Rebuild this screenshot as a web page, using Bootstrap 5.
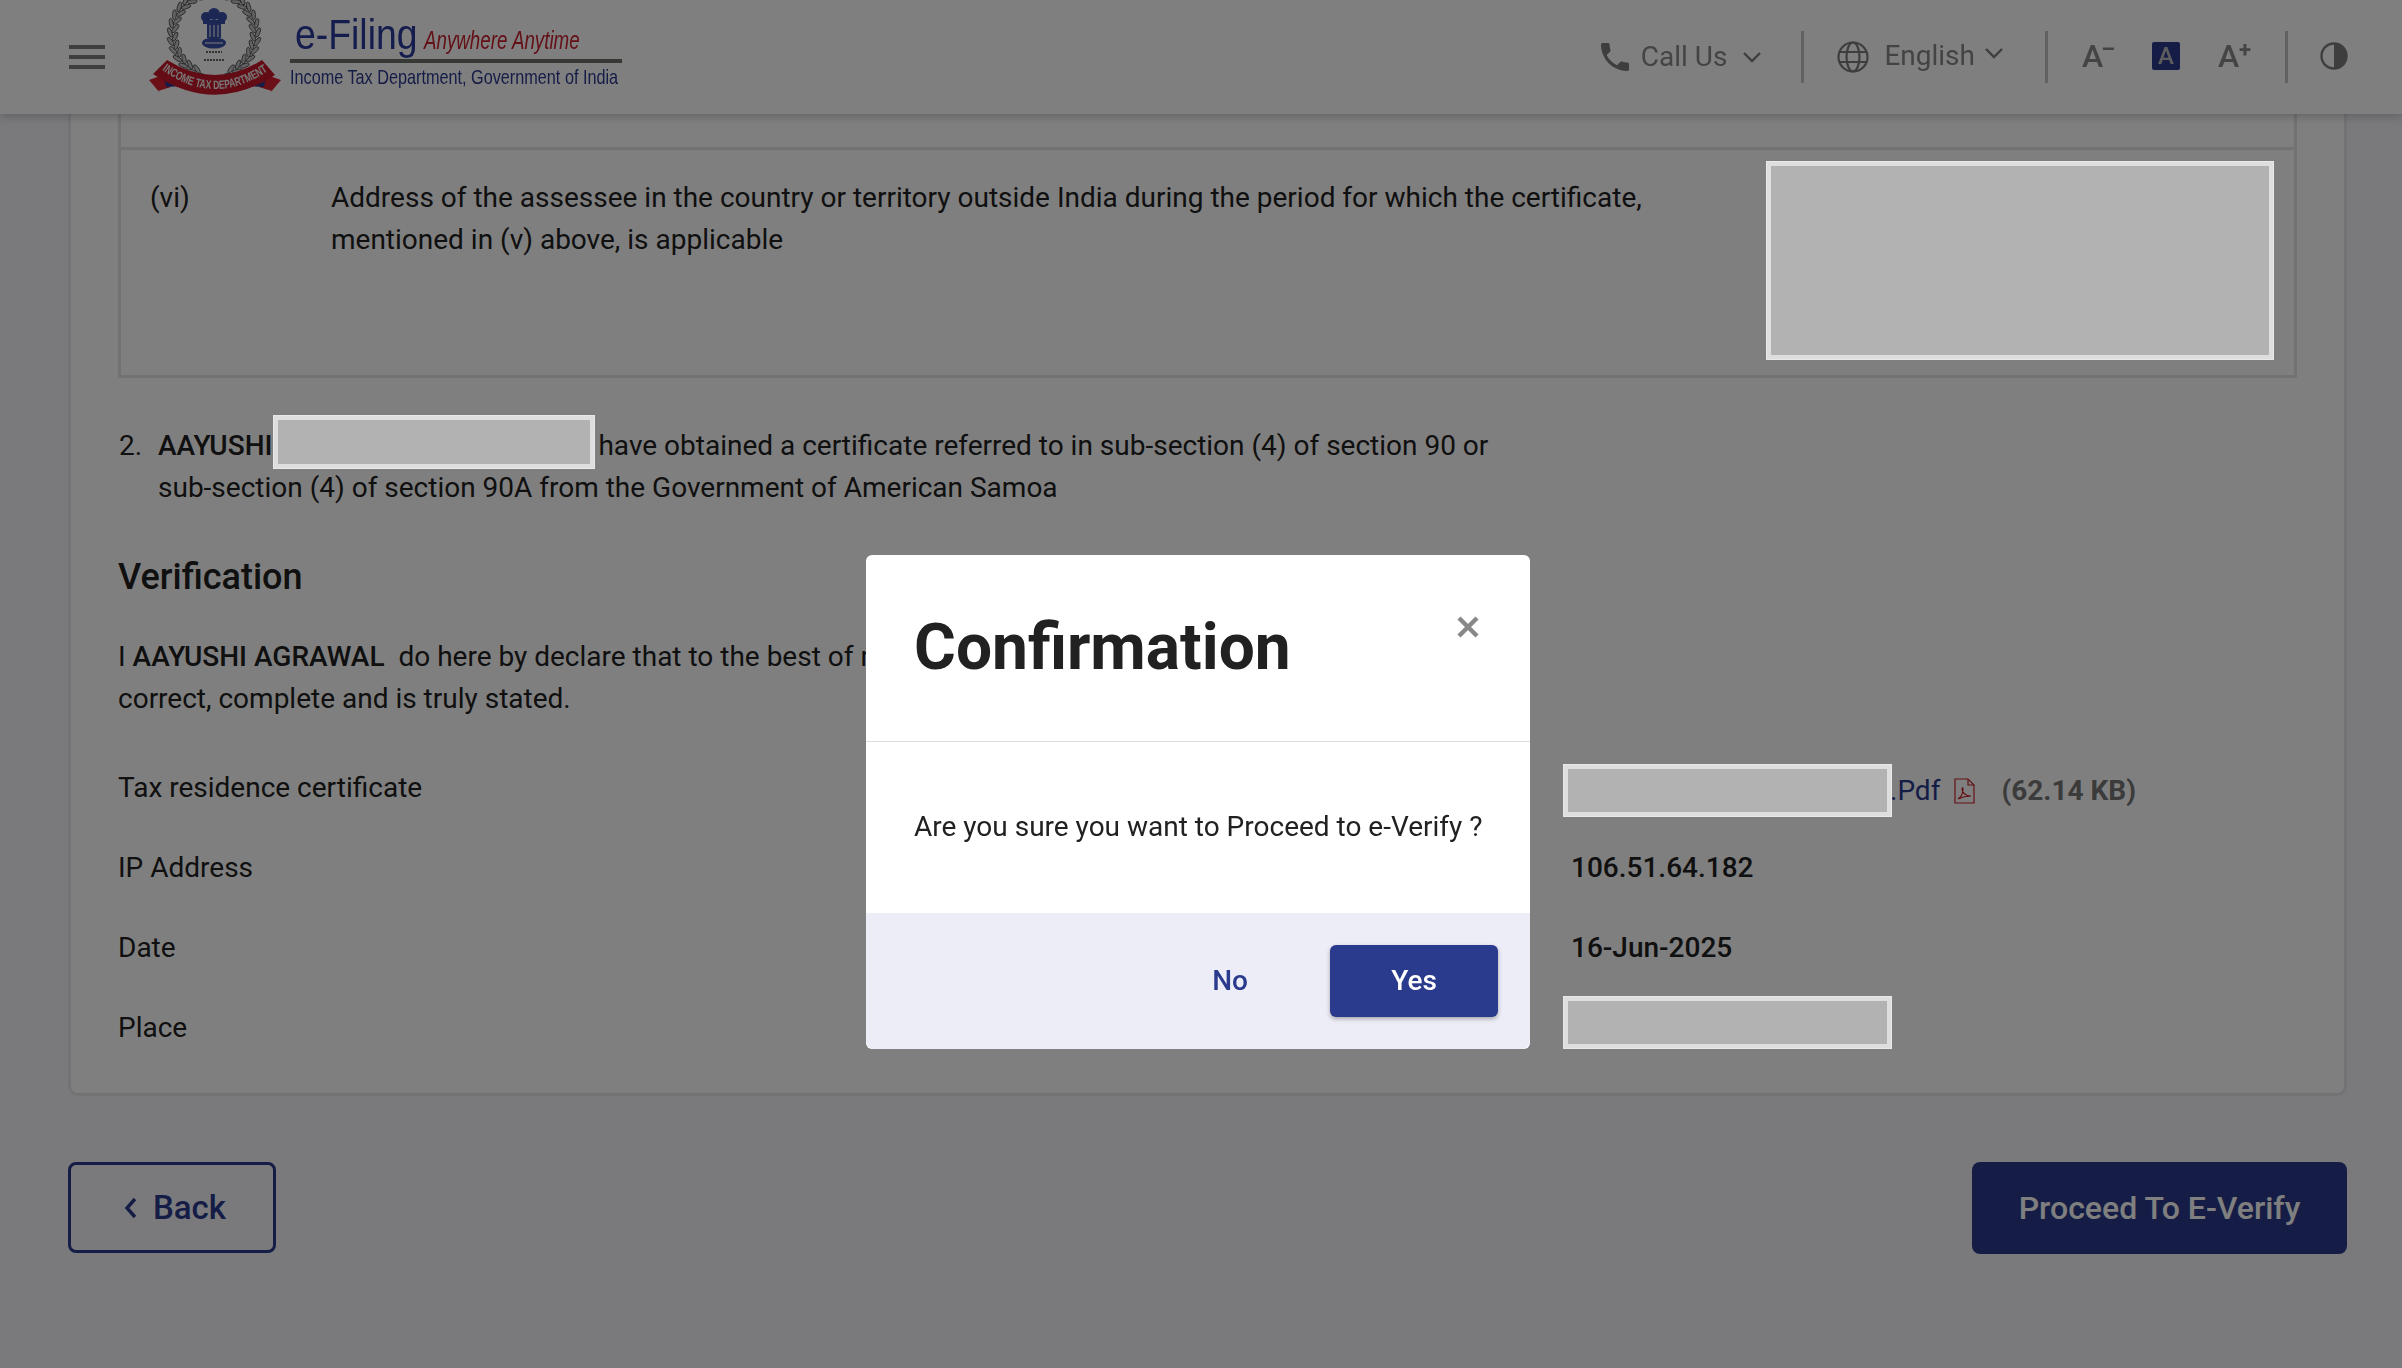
<!DOCTYPE html>
<html lang="en">
<head>
<meta charset="UTF-8">
<meta name="viewport" content="width=device-width, initial-scale=1.0">
<title>e-Filing</title>
<link href="https://cdn.jsdelivr.net/npm/bootstrap@5.3.0/dist/css/bootstrap.min.css" rel="stylesheet">
<style>
body { font-family: Roboto, sans-serif; font-size: 28px; line-height: 42px; color: #212121; background: #f5f5fa; height: 1368px; overflow: hidden; padding-top: 114px; }
.top-bar { height: 114px; padding: 0 54px 0 69px; background: #fff; box-shadow: 0 2px 10px rgba(0,0,0,.25); }
.burger { width: 36px; height: 24px; display: flex; flex-direction: column; justify-content: space-between; }
.burger span { height: 4px; background: #7c7c7c; }
.logo-svg { margin-left: 44px; align-self: flex-start; }
.logo-text { margin-left: 9px; width: 332px; align-self: flex-start; font-family: "Liberation Sans", sans-serif; line-height: 1; }
.logo-top { height: 59px; padding: 14px 0 0 5px; white-space: nowrap; color: #2a3a9c; font-size: 42px; }
.logo-name { display: inline-block; width: 129px; transform: scaleX(.89); transform-origin: left; }
.logo-top i { display: inline-block; color: #c8202f; font-size: 25px; transform: scaleX(.75); transform-origin: left; }
.logo-rule { height: 4px; background: #6f7468; }
.logo-sub { padding-top: 3px; color: #2a3a8c; font-size: 21px; white-space: nowrap; transform: scaleX(.773); transform-origin: left; }
.tool-text { color: #888; font-size: 28px; line-height: 1; }
.tool-rule { width: 3px; height: 52px; background: #c2c2c2; }
.font-a { position: relative; width: 30px; margin-top: -3px; color: #888; font-size: 32px; font-weight: 500; line-height: 1; }
.font-a sup { position: absolute; top: 3px; right: -3px; font-size: 22px; font-weight: 700; line-height: .6; }
.font-a-on { width: 28px; height: 28px; margin-top: -3px; border-radius: 2px; background: #2a3a8c; color: #bbb; font-size: 24px; font-weight: 500; line-height: 28px; text-align: center; }
.sheet { width: 2279px; height: 982px; margin-left: 68px; border: 3px solid #e6e6ec; border-top: 0; border-radius: 0 0 10px 10px; background: #fff; padding: 0 47px 0; }
.stub { height: 33px; border: solid #e4e4ea; border-width: 0 3px; }
.cert-row { height: 231px; border: 3px solid #e4e4ea; }
.cert-num { width: 210px; flex: none; padding: 27px 0 0 29px; }
.cert-desc { padding-top: 27px; }
.hide-box { display: block; flex: none; background: #b2b2b2; border: 5px solid #dedede; outline: 1px solid #e8e8e8; outline-offset: -1px; position: relative; z-index: 1051; }
.hide-big { width: 508px; height: 199px; margin: 11px 20px 0 auto; }
.hide-field { width: 329px; height: 53px; align-self: flex-start; }
.hide-inline { display: inline-block; width: 322px; height: 54px; margin: -20px 3px -8px 1px; vertical-align: middle; }
.para-num { margin-top: 47px; }
.para-num span:first-child { width: 40px; flex: none; padding-left: 1px; }
.verify-title { margin: 47px 0 0; font-size: 36px; line-height: 43px; font-weight: 500; }
.declare { margin: 37px 0 28px; }
.field-row { height: 80px; }
.field-row:first-of-type { height: 77px; }
.field-name { width: 1445px; flex: none; }
.field-val { padding-left: 8px; font-weight: 500; }
.hide-first { margin-top: 16px; }
.hide-last { margin-top: 8px; }
.file-link { margin: 5px 0 0 -2px; color: #2a3a8c; font-size: 28px; }
.pdf-icon { margin: 5px 0 0 14px; }
.file-size { margin: 5px 0 0 26px; color: #777; font-weight: 700; }
.act-row { width: 2279px; margin: 66px 0 0 68px; }
.btn-back { width: 208px; height: 91px; padding: 0 0 0 6px; border: 3px solid #2a3a8c; border-radius: 8px; color: #2a3a8c; font-size: 33px; font-weight: 500; }
.btn-go { width: 375px; height: 92px; border-radius: 8px; background: #2a3a8c; color: #fff; font-size: 32px; font-weight: 500; border: 0; }
.confirm-dialog { max-width: 664px; width: 664px; margin: 555px auto 0; }
.modal { padding-right: 6px; }
.confirm-head { height: 187px; padding: 0 48px; border-bottom: 1px solid #ddd; }
.confirm-title { margin: 0; font-size: 64px; line-height: 1; font-weight: 700; padding-top: 61px; }
.confirm-x { margin: 61px 3px 0 0; padding: 0; background: none; border: 0; line-height: 0; }
.confirm-body { height: 171px; padding: 64px 48px 0; white-space: nowrap; }
.confirm-foot { height: 136px; padding: 0 32px 0 0; background: #ecedf6; border-radius: 0 0 8px 8px; }
.btn-no { margin-right: 82px; padding: 0; border: 0; color: #2a3a8c; font-size: 28px; font-weight: 500; }
.btn-yes { width: 168px; height: 72px; padding: 0; border: 0; border-radius: 6px; background: #2a3a8c; color: #fff; font-size: 28px; font-weight: 500; box-shadow: 0 2px 4px rgba(0,0,0,.3); }
</style>
</head>
<body>

<header class="top-bar fixed-top d-flex align-items-center">
    <div class="burger"><span></span><span></span><span></span></div>

    <svg class="logo-svg" width="132" height="96" viewBox="0 0 132 96">
        <g id="wreath" fill="#c4c4c4" stroke="#444" stroke-width=".8"></g>
        <g fill="#3a4ea8">
            <circle cx="57" cy="17" r="5"/><circle cx="65" cy="14" r="6"/><circle cx="73" cy="17" r="5"/>
            <rect x="54" y="20" width="22" height="4"/>
            <rect x="58" y="24" width="14" height="14"/>
            <ellipse cx="65" cy="43" rx="12" ry="5.5"/>
        </g>
        <path d="M61 25v12M65 25v12M69 25v12M56 43h18" stroke="#fff" stroke-width="1"/>
        <path d="M57 52h16M55 60h20" stroke="#666" stroke-width="2" stroke-dasharray="2 1"/>
        <path d="M0 80l14-5 8 12-13 4 2 2z" fill="#d8202f"/>
        <path d="M132 80l-14-5-8 12 13 4-2 2z" fill="#d8202f"/>
        <path d="M14 72l20 14-17 1zM118 72l-20 14 17 1z" fill="#2a3a8c"/>
        <path id="band" d="M18 60Q66 90 113 60L126 75Q66 115 4 74Z" fill="#c8182a"/>
        <path id="band-line" d="M13 70Q66 108 120 70" fill="none"/>
        <text font-family="'Liberation Sans',sans-serif" font-size="12" font-weight="700" fill="#eee">
            <textPath href="#band-line" textLength="114" lengthAdjust="spacingAndGlyphs">INCOME TAX DEPARTMENT</textPath>
        </text>
    </svg>

    <div class="logo-text">
        <div class="logo-top"><span class="logo-name">e-Filing</span><i>Anywhere Anytime</i></div>
        <div class="logo-rule"></div>
        <div class="logo-sub">Income Tax Department, Government of India</div>
    </div>

    <div class="ms-auto d-flex align-items-center">
        <svg width="28" height="28" viewBox="3 3 18 18" fill="#7c7c7c"><path d="M6.62 10.79c1.44 2.83 3.76 5.14 6.59 6.59l2.2-2.2c.27-.27.67-.36 1.02-.24 1.12.37 2.33.57 3.57.57.55 0 1 .45 1 1V20c0 .55-.45 1-1 1-9.39 0-17-7.61-17-17 0-.55.45-1 1-1h3.5c.55 0 1 .45 1 1 0 1.25.2 2.45.57 3.57.11.35.03.74-.25 1.02l-2.2 2.2z"/></svg>
        <span class="tool-text ms-2 ps-1">Call Us</span>
        <svg class="ms-3" width="18" height="11" viewBox="0 0 18 11" fill="none" stroke="#7c7c7c" stroke-width="2.4"><path d="M1 1l8 8 8-8"/></svg>
        <span class="tool-rule" style="margin:0 33px 0 40px"></span>
        <svg width="32" height="32" viewBox="0 0 32 32" fill="none" stroke="#7c7c7c" stroke-width="2.2"><circle cx="16" cy="16" r="14.5"/><ellipse cx="16" cy="16" rx="6.5" ry="14.5"/><path d="M2 11h28M2 21h28"/></svg>
        <span class="tool-text" style="margin:-2px 0 0 15px">English</span>
        <svg style="margin:-8px 0 0 10px" width="18" height="11" viewBox="0 0 18 11" fill="none" stroke="#7c7c7c" stroke-width="2.4"><path d="M1 1l8 8 8-8"/></svg>
        <span class="tool-rule" style="margin:0 34px 0 42px"></span>
        <span class="font-a">A<sup>&#8211;</sup></span>
        <span class="font-a-on" style="margin-left:40px;margin-right:38px">A</span>
        <span class="font-a">A<sup>+</sup></span>
        <span class="tool-rule" style="margin:0 32px 0 37px"></span>
        <svg style="margin-top:-3px" width="28" height="28" viewBox="0 0 28 28"><circle cx="14" cy="14" r="12.5" fill="none" stroke="#7c7c7c" stroke-width="2.4"/><path d="M14 1.5a12.5 12.5 0 0 1 0 25z" fill="#7c7c7c"/></svg>
    </div>
</header>

<main>
    <div class="sheet">
        <div class="stub"></div>
        <div class="cert-row d-flex">
            <div class="cert-num">(vi)</div>
            <div class="cert-desc">Address of the assessee in the country or territory outside India during the period for which the certificate,<br>mentioned in (v) above, is applicable</div>
            <span class="hide-box hide-big"></span>
        </div>

        <div class="para-num d-flex">
            <span>2.</span>
            <span><b class="fw-medium">AAYUSHI</b><span class="hide-box hide-inline"></span>have obtained a certificate referred to in sub-section (4) of section 90 or<br>sub-section (4) of section 90A from the Government of American Samoa</span>
        </div>

        <h4 class="verify-title">Verification</h4>
        <p class="declare">I <b class="fw-medium">AAYUSHI AGRAWAL</b>&nbsp; do here by declare that to the best of my knowledge<br>correct, complete and is truly stated.</p>

        <div class="field-row d-flex align-items-center">
            <div class="field-name">Tax residence certificate</div>
            <span class="hide-box hide-field hide-first"></span>
            <span class="file-link">.Pdf</span>
            <svg class="pdf-icon" width="21" height="26" viewBox="0 0 21 26" fill="none" stroke="#c8202a" stroke-width="1.2"><path d="M1 1h13l6 6v18H1z"/><path d="M14 1v6h6"/><path d="M4 21c3-2 5-6 5-10 0-2-1-1-1 0 0 4 4 7 9 7-4 0-9 1-13 3z"/></svg>
            <span class="file-size">(62.14 KB)</span>
        </div>
        <div class="field-row d-flex align-items-center">
            <div class="field-name">IP Address</div>
            <div class="field-val">106.51.64.182</div>
        </div>
        <div class="field-row d-flex align-items-center">
            <div class="field-name">Date</div>
            <div class="field-val">16-Jun-2025</div>
        </div>
        <div class="field-row d-flex align-items-center">
            <div class="field-name">Place</div>
            <span class="hide-box hide-field hide-last"></span>
        </div>
    </div>

    <div class="act-row d-flex justify-content-between">
        <button class="btn btn-back d-flex align-items-center justify-content-center gap-3" type="button">
            <svg width="13" height="22" viewBox="0 0 13 22" fill="none" stroke="#2a3a8c" stroke-width="3.4"><path d="M11 2l-8 9 8 9"/></svg>
            Back
        </button>
        <button class="btn btn-go p-0" type="button">Proceed To E-Verify</button>
    </div>
</main>

<div class="modal-backdrop show"></div>

<div class="modal d-block" tabindex="-1">
    <div class="modal-dialog confirm-dialog">
        <div class="modal-content border-0 rounded-2">
            <div class="confirm-head d-flex justify-content-between align-items-start">
                <h1 class="confirm-title">Confirmation</h1>
                <button class="confirm-x" type="button" aria-label="Close">
                    <svg width="22" height="22" viewBox="0 0 22 22" stroke="#888" stroke-width="4.5"><path d="M2 2l18 18M20 2L2 20"/></svg>
                </button>
            </div>
            <div class="confirm-body">Are you sure you want to Proceed to e-Verify ?</div>
            <div class="confirm-foot d-flex justify-content-end align-items-center">
                <button class="btn btn-no" type="button">No</button>
                <button class="btn btn-yes" type="button">Yes</button>
            </div>
        </div>
    </div>
</div>

<script src="https://cdn.jsdelivr.net/npm/bootstrap@5.3.0/dist/js/bootstrap.bundle.min.js"></script>
<script>
    // laurel leaves round the emblem, two rows with a gap at the top
    var leaves = ""
    for (var a = 22; a <= 165; a += 12) {
        [-1, 1].forEach(function (side) {
            [39, 44].forEach(function (r) {
                var rad = (a + (r == 44 ? 6 : 0)) * Math.PI / 180
                var x = 65 + side * r * Math.sin(rad)
                var y = 34 - r * Math.cos(rad)
                var turn = side * (a + (r == 44 ? 30 : -30))
                leaves += `<ellipse cx="${x}" cy="${y}" rx="5" ry="1.9" transform="rotate(${turn} ${x} ${y})"/>`
            })
        })
    }
    document.getElementById("wreath").innerHTML = leaves
</script>
</body>
</html>
